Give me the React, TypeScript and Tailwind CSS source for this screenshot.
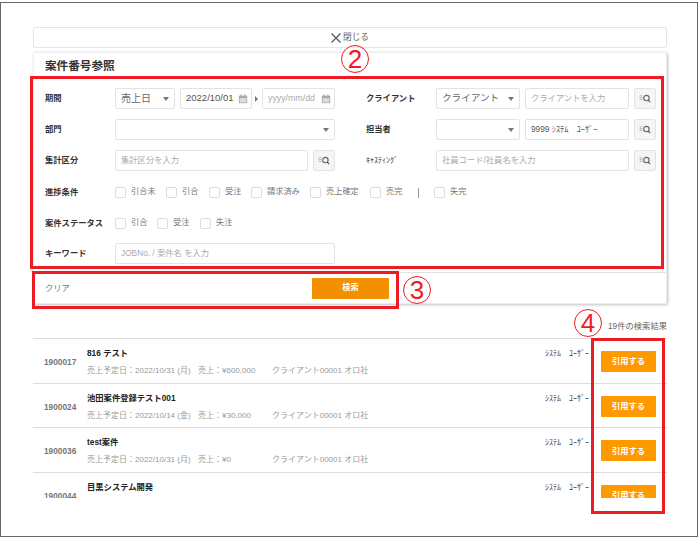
/** 案件番号参照 */

const field = 'h-[21px] border border-[#e3e3e3] rounded-[2px] bg-white flex items-center shrink-0';

const Chevron = () => <span className="ml-auto mr-[5px] w-0 h-0 border-x-[3px] border-x-transparent border-t-[4px] border-t-[#777]" />;

const Calendar = () => (
  <svg viewBox="0 0 12 12" className="ml-auto mr-[3px] w-[10px] h-[10px] shrink-0" fill="#aaa">
    <rect x="1" y="2" width="10" height="9" />
    <rect x="3" y="0.5" width="1.5" height="3" />
    <rect x="7.5" y="0.5" width="1.5" height="3" />
    <rect x="2" y="5" width="8" height="5" fill="#ddd" />
  </svg>
);

const LookupButton = () => (
  <div className="ml-[5px] w-[22px] h-[21px] border border-[#e3e3e3] rounded-[2px] bg-[#f5f5f5] flex items-center justify-center shrink-0">
    <svg viewBox="0 0 14 10" className="w-[13px] h-[9px]" fill="none" stroke="#666">
      <path d="M0.5 2h3M0.5 4h3M0.5 6h3" strokeWidth="0.8" stroke="#999" />
      <circle cx="8" cy="4.5" r="3" strokeWidth="1.3" />
      <path d="M10 6.8l2.2 2.2" strokeWidth="1.5" />
    </svg>
  </div>
);

const Label = ({ children, className = '' }: { children: React.ReactNode; className?: string }) => (
  <div className={`text-[8.3px] font-bold text-[#333] shrink-0 ${className}`}>{children}</div>
);

const Check = ({ label, className = '' }: { label: string; className?: string }) => (
  <div className={`flex items-center shrink-0 ${className}`}>
    <span className="w-[11px] h-[11px] border border-[#ddd] rounded-[2px] bg-white" />
    <span className="ml-[5px] text-[8.2px] text-[#777]">{label}</span>
  </div>
);

const results = [
  { no: '1900017', title: '816 テスト', date: '2022/10/31 (月)', sales: '¥600,000' },
  { no: '1900024', title: '池田案件登録テスト001', date: '2022/10/14 (金)', sales: '¥30,000' },
  { no: '1900036', title: 'test案件', date: '2022/10/31 (月)', sales: '¥0' },
  { no: '1900044', title: '目黒システム開発', date: '', sales: '' },
];

const Annotation = ({ n, className }: { n: string; className: string }) => (
  <div className={`absolute w-[28px] h-[28px] rounded-full border border-[#ed1c24] text-[#ed1c24] text-[26px] leading-[27px] text-center ${className}`}>
    {n}
  </div>
);

export default function App() {
  return (
    <div className="relative w-[700px] h-[539px] bg-white overflow-hidden font-['Liberation_Sans','Noto_Sans_CJK_JP',sans-serif]">
      <div className="mt-[2px] w-[698px] h-[535px] border border-[#666] pl-[32px] pt-[24px]">
        <div className="w-[634px]">
          {/* 閉じる */}
          <div className="h-[21px] border border-[#e6e6e6] rounded-[2px] flex items-center justify-center text-[8.7px] text-[#666]">
            <svg viewBox="0 0 10 10" className="w-[10px] h-[10px] mr-[2px]" stroke="#555" strokeWidth="1.2">
              <path d="M0.5 0.5l9 9M9.5 0.5l-9 9" />
            </svg>
            閉じる
          </div>

          {/* 検索フォーム */}
          <div className="mt-[4px] h-[252px] rounded-[2px] border border-[#eee] shadow-[1px_1px_3px_rgba(0,0,0,0.25)]">
            <div className="h-[35px] pl-[11px] pt-[4px] text-[11.6px] font-bold text-[#333]">案件番号参照</div>

            <div className="pl-[11px] h-[21px] flex items-center">
              <Label className="w-[70px]">期間</Label>
              <div className={`${field} w-[60px] pl-[5px] text-[10px] text-[#666]`}>売上日<Chevron /></div>
              <div className={`${field} w-[72px] ml-[5px] pl-[5px] text-[9.5px] text-[#555]`}>2022/10/01<Calendar /></div>
              <span className="mx-[3px] w-0 h-0 border-y-[3px] border-y-transparent border-l-[3px] border-l-[#777]" />
              <div className={`${field} w-[73px] ml-[1px] pl-[5px] text-[8.8px] text-[#aaa]`}>yyyy/mm/dd<Calendar /></div>
              <Label className="ml-[31px] w-[70px]">クライアント</Label>
              <div className={`${field} w-[84px] pl-[5px] text-[9.6px] text-[#666]`}>クライアント<Chevron /></div>
              <div className={`${field} w-[104px] ml-[5px] pl-[5px] text-[8.3px] text-[#aaa]`}>クライアントを入力</div>
              <LookupButton />
            </div>

            <div className="mt-[10px] pl-[11px] h-[21px] flex items-center">
              <Label className="w-[70px]">部門</Label>
              <div className={`${field} w-[220px]`}><Chevron /></div>
              <Label className="ml-[31px] w-[70px]">担当者</Label>
              <div className={`${field} w-[84px]`}><Chevron /></div>
              <div className={`${field} w-[104px] ml-[5px] pl-[5px] text-[8.3px] text-[#555]`}>9999 ｼｽﾃﾑ　ﾕｰｻﾞｰ</div>
              <LookupButton />
            </div>

            <div className="mt-[10px] pl-[11px] h-[21px] flex items-center">
              <Label className="w-[70px]">集計区分</Label>
              <div className={`${field} w-[193px] pl-[5px] text-[8.3px] text-[#aaa]`}>集計区分を入力</div>
              <LookupButton />
              <Label className="ml-[31px] w-[70px] !font-normal !text-[8px]">ｷｬｽﾃｨﾝｸﾞ</Label>
              <div className={`${field} w-[193px] pl-[5px] text-[8.3px] text-[#aaa]`}>社員コード/社員名を入力</div>
              <LookupButton />
            </div>

            <div className="mt-[11px] pl-[11px] h-[21px] flex items-center">
              <Label className="w-[70px]">進捗条件</Label>
              <Check label="引合未" className="w-[51px]" />
              <Check label="引合" className="w-[43px]" />
              <Check label="受注" className="w-[42px]" />
              <Check label="請求済み" className="w-[59px]" />
              <Check label="売上確定" className="w-[60px]" />
              <Check label="売完" className="w-[48px]" />
              <span className="w-px h-[10px] bg-[#999] mr-[15px]" />
              <Check label="失完" />
            </div>

            <div className="mt-[10px] pl-[11px] h-[21px] flex items-center">
              <Label className="w-[70px]">案件ステータス</Label>
              <Check label="引合" className="w-[42px]" />
              <Check label="受注" className="w-[43px]" />
              <Check label="失注" />
            </div>

            <div className="mt-[9px] pl-[11px] h-[21px] flex items-center">
              <Label className="w-[70px]">キーワード</Label>
              <div className={`${field} w-[220px] pl-[5px] text-[8.3px] text-[#aaa]`}>JOBNo. / 案件名 を入力</div>
            </div>

            {/* フッター */}
            <div className="mt-[8px] h-[31px] border-t border-[#e3e3e3] pl-[11px] flex items-center">
              <span className="text-[8.3px] text-[#777]">クリア</span>
              <div className="ml-[242px] w-[77px] h-[21px] bg-[#f39000] rounded-[1px] text-white text-[8.2px] font-bold flex items-center justify-center">検索</div>
            </div>
          </div>

          <div className="mt-[15px] h-[19px] pt-[1px] text-right text-[8.3px] text-[#666]">19件の検索結果</div>

          {/* 検索結果 */}
          <div className="h-[160px] overflow-hidden">
            {results.map(r => (
              <div key={r.no} className="h-[44.7px] border-t border-[#ddd] flex">
                <div className="w-[54px] pl-[11px] pt-[17px] text-[8.3px] font-bold text-[#777] shrink-0">{r.no}</div>
                <div className="w-[458px] shrink-0">
                  <div className="pt-[8px] h-[26px] text-[8.3px] font-bold text-[#222]">{r.title}</div>
                  {r.date && (
                    <div className="flex text-[8px] text-[#999] whitespace-nowrap">
                      <span className="w-[111px]">売上予定日：{r.date}</span>
                      <span className="w-[74px]">売上：{r.sales}</span>
                      <span>クライアント00001 オロ社</span>
                    </div>
                  )}
                </div>
                <div className="w-[56px] pt-[9px] text-[8px] text-[#444] shrink-0 whitespace-nowrap">ｼｽﾃﾑ　ﾕｰｻﾞｰ</div>
                <div className="pt-[12px] shrink-0">
                  <div className="w-[55px] h-[21px] bg-[#ff9900] rounded-[1px] text-white text-[8.3px] font-bold flex items-center justify-center">引用する</div>
                </div>
              </div>
            ))}
          </div>
        </div>
      </div>

      {/* 注釈 */}
      <div className="absolute left-[30px] top-[76px] w-[634px] h-[193px] border-[3px] border-[#ed1c24]" />
      <div className="absolute left-[32px] top-[271px] w-[367px] h-[38px] border-[3px] border-[#ed1c24]" />
      <div className="absolute left-[591px] top-[338px] w-[74px] h-[176px] border-[3px] border-[#ed1c24]" />
      <Annotation n="2" className="left-[341px] top-[45px]" />
      <Annotation n="3" className="left-[403px] top-[276px]" />
      <Annotation n="4" className="left-[574px] top-[309px]" />
    </div>
  );
}
